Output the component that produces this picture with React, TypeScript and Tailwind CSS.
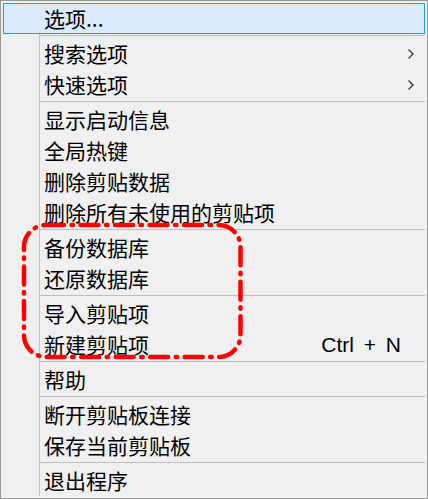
import React from 'react';

type Item =
  | { kind: 'sep' }
  | { kind: 'item'; label: string; active?: boolean; sub?: boolean; shortcut?: string };

const items: Item[] = [
  { kind: 'item', label: '选项...', active: true },
  { kind: 'sep' },
  { kind: 'item', label: '搜索选项', sub: true },
  { kind: 'item', label: '快速选项', sub: true },
  { kind: 'sep' },
  { kind: 'item', label: '显示启动信息' },
  { kind: 'item', label: '全局热键' },
  { kind: 'item', label: '删除剪贴数据' },
  { kind: 'item', label: '删除所有未使用的剪贴项' },
  { kind: 'sep' },
  { kind: 'item', label: '备份数据库' },
  { kind: 'item', label: '还原数据库' },
  { kind: 'sep' },
  { kind: 'item', label: '导入剪贴项' },
  { kind: 'item', label: '新建剪贴项', shortcut: 'Ctrl + N' },
  { kind: 'sep' },
  { kind: 'item', label: '帮助' },
  { kind: 'sep' },
  { kind: 'item', label: '断开剪贴板连接' },
  { kind: 'item', label: '保存当前剪贴板' },
  { kind: 'sep' },
  { kind: 'item', label: '退出程序' },
];

const Chevron = () => (
  <svg width="8" height="12" viewBox="0 0 8 12" fill="none">
    <path d="M1.5 1.5 L6 6 L1.5 10.5" stroke="#333" strokeWidth="1.3" />
  </svg>
);

function Row({ item }: { item: Extract<Item, { kind: 'item' }> }) {
  if (item.active) {
    return (
      <div className="flex h-[31px] shrink-0 items-center border border-[#3399dd] bg-[#dbeafd]">
        <div className="w-[36px] shrink-0" />
        <span className="pl-[4px] text-[21px] text-black">{item.label}</span>
      </div>
    );
  }
  return (
    <div className="flex h-[31px] shrink-0 items-center">
      <div className="h-full w-[37px] shrink-0 border-r border-[#c4c4c4]" />
      <span className="flex-1 pl-[4px] text-[21px] text-black">{item.label}</span>
      {item.shortcut && (
        <span className="font-['Liberation_Sans',Arial,sans-serif] text-[21px] text-black [word-spacing:4px]">
          {item.shortcut}
        </span>
      )}
      <div className="flex h-full w-[24px] shrink-0 items-center pl-[6px]">
        {item.sub && <Chevron />}
      </div>
    </div>
  );
}

export default function App() {
  return (
    <div className="relative flex h-[499px] w-[428px] flex-col overflow-hidden border border-[#999] bg-[#f0f0f0] p-[2px] font-['Noto_Sans_CJK_SC','Noto_Sans',sans-serif] leading-none">
      {items.map((it, i) =>
        it.kind === 'sep' ? (
          <div key={i} className="flex h-[4px] shrink-0">
            <div className="h-full w-[37px] shrink-0 border-r border-[#c4c4c4]" />
            <div className="flex-1 pt-px">
              <div className="h-px bg-[#bdbdbd]" />
            </div>
          </div>
        ) : (
          <Row key={i} item={it} />
        )
      )}
      <div className="w-[37px] flex-1 border-r border-[#c4c4c4]" />

      {/* red annotation */}
      <svg className="pointer-events-none absolute left-0 top-0" width="428" height="499">
        <rect
          x="23"
          y="224"
          width="216.5"
          height="132"
          rx="22"
          fill="none"
          stroke="#ff0000"
          strokeWidth="4.5"
          strokeLinecap="round"
          strokeDasharray="18 7.5 1.5 7.5"
        />
      </svg>
    </div>
  );
}
